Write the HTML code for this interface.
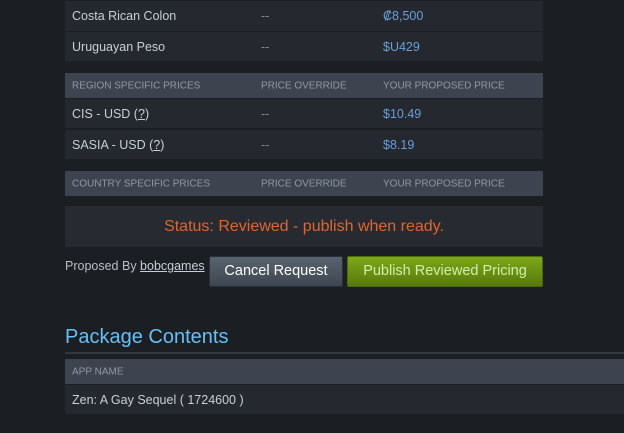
<!DOCTYPE html>
<html><head><style>
body{margin:0;width:624px;height:433px;background:#1b1e23;font-family:"Liberation Sans",sans-serif;position:relative;overflow:hidden}
.a{position:absolute}
.row{position:absolute;left:65px;width:478px;background:#25282e;color:#c6d0d8;font-size:12.5px}
.row span,.hd span{position:absolute;top:50%;transform:translateY(-50%)}
.hd{position:absolute;left:65px;width:478px;background:#3d4450;color:#8f99a3;font-size:10px}
.b{color:#6a9fdc}
</style></head><body>
<div class="row" style="top:1px;height:30px"><span style="left:7px">Costa Rican Colon</span><span style="left:196px;color:#888">--</span><span class="b" style="left:318px">₡8,500</span></div>
<div class="row" style="top:32px;height:29px"><span style="left:7px">Uruguayan Peso</span><span style="left:196px;color:#888">--</span><span class="b" style="left:318px">$U429</span></div>
<div class="hd" style="top:73px;height:25px"><span style="left:7px">REGION SPECIFIC PRICES</span><span style="left:196px">PRICE OVERRIDE</span><span style="left:318px">YOUR PROPOSED PRICE</span></div>
<div class="row" style="top:99px;height:29px"><span style="left:7px">CIS - USD (<u>?</u>)</span><span style="left:196px;color:#888">--</span><span class="b" style="left:318px">$10.49</span></div>
<div class="row" style="top:130px;height:29px"><span style="left:7px">SASIA - USD (<u>?</u>)</span><span style="left:196px;color:#888">--</span><span class="b" style="left:318px">$8.19</span></div>
<div class="hd" style="top:171px;height:25px"><span style="left:7px">COUNTRY SPECIFIC PRICES</span><span style="left:196px">PRICE OVERRIDE</span><span style="left:318px">YOUR PROPOSED PRICE</span></div>
<div class="a" style="left:65px;top:206px;width:478px;height:41px;background:#272a30;color:#e0652e;font-size:16px;text-align:center;line-height:41px">Status: Reviewed - publish when ready.</div>
<div class="a" style="left:65px;top:259px;color:#b8bfc6;font-size:12.5px">Proposed By <u style="color:#c6d0d8">bobcgames</u></div>
<div class="a" style="left:209px;top:256px;width:134px;height:31px;box-sizing:border-box;border:1px solid #2a2e35;border-radius:2px;background:linear-gradient(#5a6470,#3d4550);color:#fff;font-size:14.5px;text-align:center;line-height:29px">Cancel Request</div>
<div class="a" style="left:347px;top:256px;width:196px;height:31px;box-sizing:border-box;border:1px solid #4a6a10;border-radius:2px;background:linear-gradient(#7ea71a,#57790b);color:#d2efa9;font-size:14.5px;text-align:center;line-height:29px">Publish Reviewed Pricing</div>
<div class="a" style="left:65px;top:326px;color:#66c0f4;font-size:20px">Package Contents</div>
<div class="a" style="left:65px;top:352px;width:559px;height:2px;background:#33373e"></div>
<div class="hd" style="top:359px;width:559px;height:25px"><span style="left:7px">APP NAME</span></div>
<div class="row" style="top:385px;width:559px;height:29px;font-size:12.5px"><span style="left:7px">Zen: A Gay Sequel ( 1724600 )</span></div>
</body></html>
